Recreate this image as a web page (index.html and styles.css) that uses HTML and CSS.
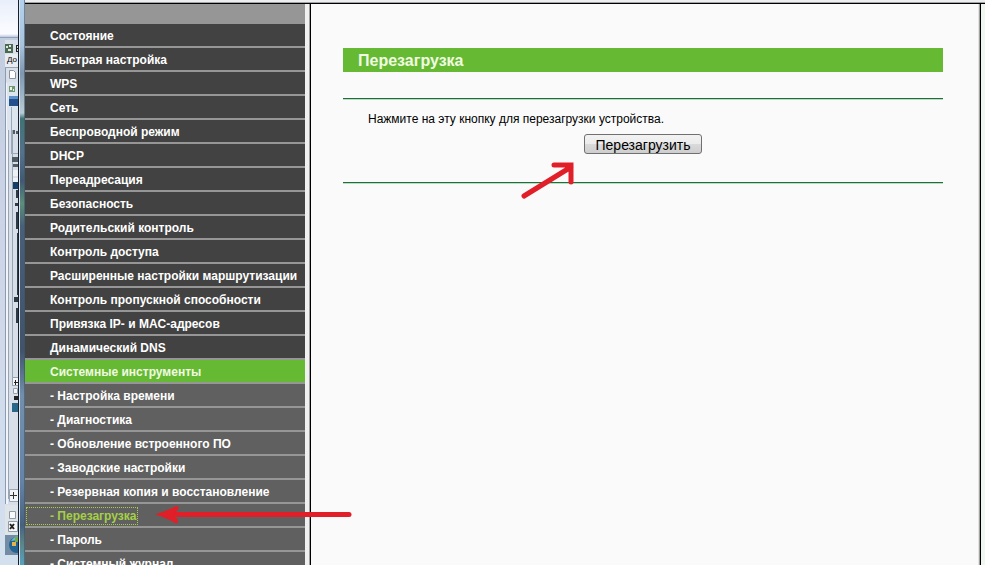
FILE: index.html
```html
<!DOCTYPE html>
<html lang="ru">
<head>
<meta charset="utf-8">
<title>Перезагрузка</title>
<link rel="stylesheet" href="styles.css">
</head>
<body>
<div class="screen">
  <div class="desktop">
    <svg class="desktop-art" width="25" height="565" viewBox="0 0 25 565" aria-hidden="true">
      <defs>
        <linearGradient id="back" x1="0" y1="0" x2="0" y2="1">
          <stop offset="0" stop-color="#e9effb"/><stop offset=".06" stop-color="#fbfcff"/><stop offset=".065" stop-color="#c3cde0"/><stop offset=".6" stop-color="#cfd9ea"/><stop offset="1" stop-color="#d3e0ee"/>
        </linearGradient>
        <linearGradient id="glass" x1="0" y1="0" x2="0" y2="1">
          <stop offset="0" stop-color="#b4d2ee"/><stop offset=".08" stop-color="#a9c3dc"/><stop offset=".13" stop-color="#7f97b0"/><stop offset=".2" stop-color="#b9cbd6"/><stop offset=".21" stop-color="#3f7474"/><stop offset=".27" stop-color="#55728c"/><stop offset=".32" stop-color="#415a74"/><stop offset=".36" stop-color="#5c8f7c"/><stop offset=".4" stop-color="#496078"/><stop offset=".62" stop-color="#40536b"/><stop offset=".7" stop-color="#7290ad"/><stop offset=".85" stop-color="#6684a8"/><stop offset=".93" stop-color="#47627f"/><stop offset=".96" stop-color="#5b8387"/><stop offset="1" stop-color="#56a2bd"/>
        </linearGradient>
      </defs>
      <path fill="url(#back)" d="M0 0h25v565H0z"/>
      <path fill="#8fa0bd" d="M0 37h18v1H0z"/>
      <path fill="#d9dfe8" d="M5 40h14v465H5z"/>
      <path fill="#8b9bb1" d="M5 68h1v436h-1z"/>
      <path fill="#f1f4f8" d="M6 83h2v421H6z"/>
      <path fill="#e8ebef" d="M5 54h14v13H5z"/>
      <path fill="#98a4b4" d="M5 67h14v1H5zM8 84h1v415H8zM12 130h1v256h-1z"/>
      <path fill="#4b6954" d="M5 44h8v9H5z"/>
      <path fill="#dfe9d6" d="M6 46h2v2H6zM9 45h2v2H9zM8 49h3v2H8z"/>
      <path fill="#222" d="M16 45h3v1h-2v2h2v1h-2v2h2v1h-3z"/>
      <path fill="#fff" stroke="#8992a0" d="M9.500 70.500h4l2 2v6h-6z"/>
      <path fill="#dce4ed" d="M7 82h12v48H7z"/>
      <path fill="#709875" d="M9 86h6v6H9z"/>
      <path fill="#e9f0dc" d="M10 87h2v3h-2zM13 89h1v2h-1z"/>
      <path fill="#234f8c" d="M9 96h10v10H9z"/>
      <path fill="#5c91ca" d="M9 96h10v3H9z"/>
      <path fill="#9baabb" d="M11 107h1v46h-1zM11 153h8v1h-8z"/>
      <path fill="#4f5c63" d="M13 130h2v4h-2zM16 131h2v3h-2zM12 157h6v5h-6zM13 164h5v3h-5z"/>
      <path fill="#eff2f4" d="M13 170h5v6h-5zM13 178h5v4h-5z"/>
      <path fill="#173e66" d="M13 182h5v7h-5z"/>
      <path fill="#2d3b49" d="M16 190h2v8h-2zM15 203h3v3h-3zM16 212h2v17h-2zM17 233h1v62h-1zM14 297h4v5h-4zM16 308h2v15h-2z"/>
      <path fill="#f4f5f6" stroke="#96a1ad" d="M12.500 377.500h6v8h-6zM13.500 388.500h4v5h-4z"/>
      <path fill="#222" d="M15 380h1v5h-1zM14 382h4v1h-4zM14 396h4v4h-4z"/>
      <path fill="#28668a" d="M12 403h7v9h-7z"/>
      <path fill="#f3f5f7" stroke="#9aa7b6" d="M9.500 489.500h9v12h-9z"/>
      <path stroke="#333" fill="none" d="M13.500 492v7M10 495.500h7"/>
      <path fill="#dfe4e8" d="M5 505h14v30H5z"/>
      <path fill="#f8f8f8" stroke="#8f9ba5" d="M9.500 511.500h6v7h-6zM8.500 521.500h9v10h-9z"/>
      <path stroke="#222" fill="none" stroke-width="2" d="M10 524l4 5M14 524l-4 5"/>
      <path fill="#738ca6" d="M5 535h14v20H5z"/>
      <circle cx="17" cy="545" r="8" fill="#236492"/>
      <path fill="#67bdcf" d="M11 541q4-6 8-4v3z"/>
      <path fill="#e5b44b" d="M12 542h4v4h-4z"/>
      <path fill="#79aa49" d="M15 537h4v5h-4z"/>
      <path fill="url(#glass)" d="M19 0h6v565h-6z"/>
      <path fill="#16202c" d="M18 0h1v565h-1z"/>
      <path fill="#dce8f1" d="M19 0h1v565h-1z"/>
      <path fill="#3c5368" fill-opacity=".6" d="M24 0h1v565h-1z"/>
    </svg>
    <span class="desktop-menu">До</span>
  </div>
  <div class="window">
    <nav class="sidebar">
      <ul class="menu">
        <li><a href="#">Состояние</a></li>
        <li><a href="#">Быстрая настройка</a></li>
        <li><a href="#">WPS</a></li>
        <li><a href="#">Сеть</a></li>
        <li><a href="#">Беспроводной режим</a></li>
        <li><a href="#">DHCP</a></li>
        <li><a href="#">Переадресация</a></li>
        <li><a href="#">Безопасность</a></li>
        <li><a href="#">Родительский контроль</a></li>
        <li><a href="#">Контроль доступа</a></li>
        <li><a href="#">Расширенные настройки маршрутизации</a></li>
        <li><a href="#">Контроль пропускной способности</a></li>
        <li><a href="#">Привязка IP- и MAC-адресов</a></li>
        <li><a href="#">Динамический DNS</a></li>
        <li class="open"><a href="#">Системные инструменты</a></li>
        <li class="sub"><a href="#">- Настройка времени</a></li>
        <li class="sub"><a href="#">- Диагностика</a></li>
        <li class="sub"><a href="#">- Обновление встроенного ПО</a></li>
        <li class="sub"><a href="#">- Заводские настройки</a></li>
        <li class="sub"><a href="#">- Резервная копия и восстановление</a></li>
        <li class="sub current"><a href="#">- Перезагрузка</a>
          <svg class="arrow-menu" width="200" height="22" viewBox="0 0 200 22" aria-hidden="true"><path d="M195 10.500H12" stroke="#e01f29" stroke-width="5" stroke-linecap="round"/><path d="M1 10.500Q15 6 22 2q4 0 2 4l-5 4.500 5 5.500q1 4-3 3Q13 14 1 10.500z" fill="#e01f29"/></svg>
        </li>
        <li class="sub"><a href="#">- Пароль</a></li>
        <li class="sub"><a href="#">- Системный журнал</a></li>
      </ul>
    </nav>
    <main class="content">
      <h1>Перезагрузка</h1>
      <section class="panel">
        <p>Нажмите на эту кнопку для перезагрузки устройства.</p>
        <div class="actions">
          <button type="button">Перезагрузить</button>
          <svg class="arrow-button" width="56" height="40" viewBox="0 0 56 40" aria-hidden="true"><path d="M3 36L50 7M33 5h17v17" fill="none" stroke="#e01f29" stroke-width="5" stroke-linecap="round" stroke-linejoin="miter"/></svg>
        </div>
      </section>
    </main>
    <div class="edge"></div>
  </div>
</div>
</body>
</html>
```
FILE: styles.css
```css
* {
  box-sizing: border-box;
}

body {
  margin: 0;
  overflow: hidden;
  font: 12px/24px "Liberation Sans", Arial, sans-serif;
  color: #000;
  background: #fafafa;
}

.screen {
  display: flex;
  height: 100vh;
}

.desktop {
  position: relative;
  flex: none;
  width: 25px;
  overflow: hidden;
}

.desktop-art {
  display: block;
}

.desktop-menu {
  position: absolute;
  top: 54px;
  left: 7px;
  font-size: 8px;
  line-height: 12px;
}

.window {
  flex: 1;
  display: flex;
  min-width: 0;
  padding-top: 4px;
  background: linear-gradient(#eceef2 0 2px, #a4a4a4 2px 3px, #000 3px 4px, #fafafa 4px);
}

.sidebar {
  flex: none;
  width: 280px;
  padding-top: 20px;
  background: #969696;
}

.menu {
  margin: 0;
  padding: 0;
  list-style: none;
}

.menu li {
  position: relative;
  height: 24px;
  padding-left: 1px;
  border-bottom: 2px solid #969696;
  background: #424242;
}

.menu a {
  display: inline-block;
  padding-left: 24px;
  color: #fff;
  font-weight: bold;
  text-decoration: none;
  white-space: nowrap;
}

.menu .open {
  background: #66b933;
}

.menu .open a {
  color: #f0fbe0;
}

.menu .sub {
  background: #606060;
}

.menu .current {
  padding-top: 3px;
}

.menu .current a {
  display: block;
  width: max-content;
  padding-right: 2px;
  line-height: 18px;
  color: #a5d045;
  outline: 1px dotted #a5d045;
  outline-offset: -1px;
}

.arrow-menu {
  position: absolute;
  z-index: 1;
  top: 0;
  left: 129px;
}

.content {
  flex: 1;
  min-width: 0;
  padding: 44px 35px 0 32px;
  border-left: 6px solid #000;
  border-image: linear-gradient(to right, #f0f0f0 0 4px, #a0a0a0 4px 5px, #000 5px) 6;
}

.content h1 {
  margin: 0 0 26px;
  padding: 1px 15px 0;
  font-size: 16px;
  line-height: 23px;
  color: #f0fbe0;
  background: #66b933;
}

.panel {
  height: 85px;
  padding-top: 10px;
  border: solid #246b43;
  border-width: 1px 0;
  box-shadow: 0 1px #b5dfbd, inset 0 1px #b5dfbd;
}

.panel p {
  margin: 0 25px;
  line-height: 20px;
}

.actions {
  position: relative;
  display: flex;
  justify-content: center;
  width: 120px;
  margin: 5px auto 0;
}

.actions button {
  width: 118px;
  height: 20px;
  padding: 2px 0 0;
  border: 1px solid #707070;
  border-radius: 3px;
  font: 14px/16px "Liberation Sans", Arial, sans-serif;
  color: #000;
  background: linear-gradient(#f3f3f3 0%, #ebebeb 50%, #dadada 50%, #cecece 100%);
}

.arrow-button {
  position: absolute;
  top: 26px;
  left: -62px;
}

.edge {
  flex: none;
  width: 7px;
  background: linear-gradient(to right, #e4e4e4 0 1px, #a0a0a0 1px 2px, #000 2px 3px, #eff7f0 3px);
}
```
